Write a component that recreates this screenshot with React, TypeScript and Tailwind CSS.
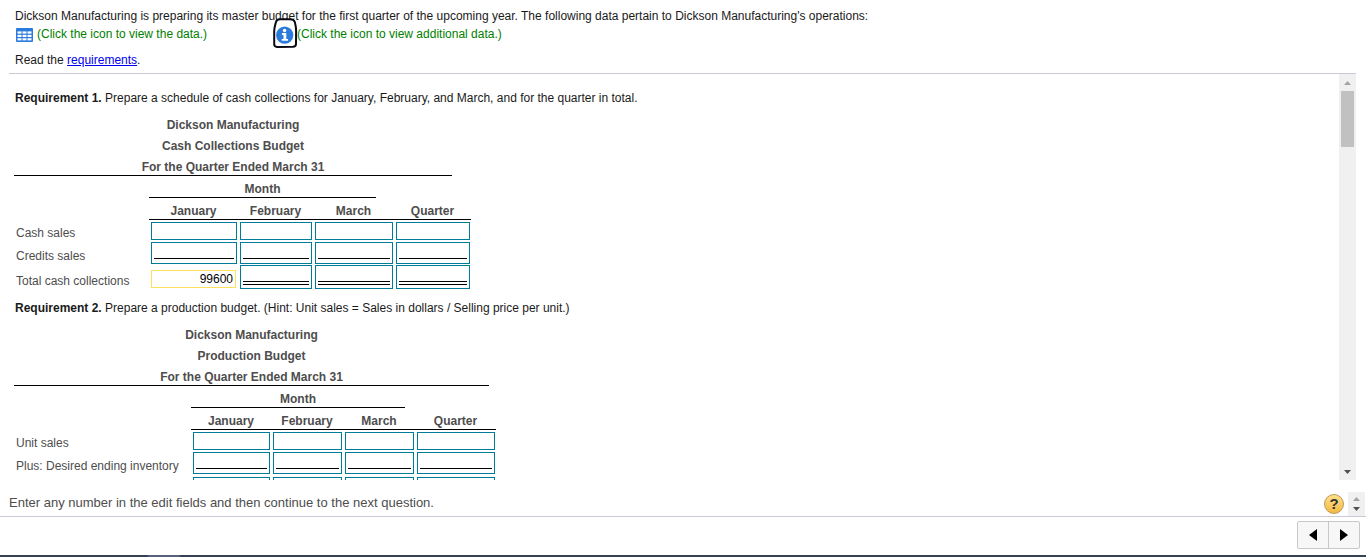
import React, { useState } from 'react';

type RowKind = 'plain' | 'single' | 'double';

interface BudgetRow {
  label: string;
  kind: RowKind;
  values?: string[];
}

interface BudgetTableProps {
  id: string;
  title: string;
  colClasses: string[];
  captionClass: string;
  monthClass: string;
  rows: BudgetRow[];
}

const COLUMNS = ['January', 'February', 'March', 'Quarter'];

const cashRows: BudgetRow[] = [
  { label: 'Cash sales', kind: 'plain' },
  { label: 'Credits sales', kind: 'single' },
  { label: 'Total cash collections', kind: 'double', values: ['99600', '', '', ''] },
];

const productionRows: BudgetRow[] = [
  { label: 'Unit sales', kind: 'plain' },
  { label: 'Plus: Desired ending inventory', kind: 'single' },
  { label: '', kind: 'plain' },
];

const labelPadding: Record<RowKind, string> = {
  plain: 'pb-0',
  single: 'pb-px',
  double: 'pb-0',
};

const cellPadding: Record<RowKind, string> = {
  plain: 'pt-[2px] pb-px',
  single: 'py-px',
  double: 'p-0',
};

const boxHeight: Record<RowKind, string> = {
  plain: 'h-[18px]',
  single: 'h-[22px]',
  double: 'h-6',
};

const AmountCell = ({ name, kind, initial }: { name: string; kind: RowKind; initial: string }) => {
  const [value, setValue] = useState(initial);

  // filled answers get the yellow box, without the total rules
  if (initial) {
    return (
      <input
        aria-label={name}
        value={value}
        onChange={(e) => setValue(e.target.value)}
        className="mb-px block h-[18px] w-[85px] border border-[#ffe05a] bg-white pr-[2px] text-right text-black outline-none"
      />
    );
  }

  return (
    <div className={`flex flex-col border border-[#007c9b] px-[2px] pb-[3px] ${boxHeight[kind]}`}>
      <input
        aria-label={name}
        value={value}
        onChange={(e) => setValue(e.target.value)}
        className="min-h-0 w-full flex-1 bg-transparent text-right text-black outline-none"
      />
      {kind === 'single' && <div className="mb-px h-px bg-black" />}
      {kind === 'double' && <div className="h-1 border-y border-black" />}
    </div>
  );
};

const BudgetTable = ({ id, title, colClasses, captionClass, monthClass, rows }: BudgetTableProps) => (
  <table className="ml-[14px] table-fixed border-collapse text-[#4d4d4d]">
    <caption className={`text-center font-bold ${captionClass}`}>
      <div className="border-b border-black">
        <div className="pt-[5px]">Dickson Manufacturing</div>
        <div className="pt-[5px]">{title}</div>
        <div className="pt-[5px]">For the Quarter Ended March 31</div>
      </div>
    </caption>
    <colgroup>
      {colClasses.map((cls, i) => (
        <col key={i} className={cls} />
      ))}
    </colgroup>
    <thead>
      <tr>
        <td className="p-0" />
        <th colSpan={3} className="p-0">
          <div className={`border-b border-black pt-[5px] ${monthClass}`}>Month</div>
        </th>
        <td className="p-0" />
      </tr>
      <tr>
        <td className="p-0" />
        {COLUMNS.map((col) => (
          <th key={col} scope="col" className="p-0">
            <div className="border-b border-black pt-[5px]">{col}</div>
          </th>
        ))}
      </tr>
    </thead>
    <tbody>
      {rows.map((row, r) => (
        <tr key={r}>
          <th
            scope="row"
            className={`pt-0 pr-0 pl-[2px] text-left align-bottom font-normal whitespace-nowrap ${labelPadding[row.kind]}`}
          >
            {row.label}
          </th>
          {COLUMNS.map((col, i) => (
            <td key={col} className={`align-bottom ${cellPadding[row.kind]}`}>
              <div className="pr-px pl-[2px]">
                <AmountCell name={`${id} row ${r + 1} ${col}`} kind={row.kind} initial={row.values?.[i] ?? ''} />
              </div>
            </td>
          ))}
        </tr>
      ))}
    </tbody>
  </table>
);

const GridIcon = () => (
  <svg width="17" height="14" viewBox="0 0 17 14" aria-hidden="true">
    <rect width="17" height="14" rx="1" fill="#2a7bdc" />
    <g fill="#fff">
      <rect x="1.5" y="3.4" width="4" height="2.2" />
      <rect x="6.5" y="3.4" width="4" height="2.2" />
      <rect x="11.5" y="3.4" width="4" height="2.2" />
      <rect x="1.5" y="6.8" width="4" height="2.2" />
      <rect x="6.5" y="6.8" width="4" height="2.2" />
      <rect x="11.5" y="6.8" width="4" height="2.2" />
      <rect x="1.5" y="10.2" width="4" height="2.2" />
      <rect x="6.5" y="10.2" width="4" height="2.2" />
      <rect x="11.5" y="10.2" width="4" height="2.2" />
    </g>
  </svg>
);

const InfoIcon = () => (
  <svg width="25" height="31" viewBox="0 0 25 31" aria-hidden="true">
    <path
      d="M3 4 C3.6 1.6 5 1.5 7 1.3 L17 1.2 C19.5 1.3 21 1.6 21.8 4 C22.6 7 23.2 9 23.1 13 L23 26 C23 28 22 28.6 20 28.7 L4 28.9 C2 28.8 1.2 28 1.2 26 L1.2 13 C1.3 9 2.2 7 3 4Z"
      fill="#fff"
      stroke="#0a0a14"
      strokeWidth="2"
    />
    <circle cx="11.7" cy="17.2" r="8.6" fill="#2a7bdc" />
    <circle cx="11.6" cy="12.5" r="1.7" fill="#fff" />
    <path d="M8.9 15h4.4v5.9h1.7v1.9H8.7v-1.9h1.8v-4H8.9z" fill="#fff" />
  </svg>
);

const Arrow = ({ up = false, color }: { up?: boolean; color: string }) => (
  <svg width="7" height="4" viewBox="0 0 7 4" aria-hidden="true">
    <path d={up ? 'M0 4h7L3.5 0z' : 'M0 0h7L3.5 4z'} fill={color} />
  </svg>
);

const App: React.FC = () => {
  return (
    <div className="flex h-screen flex-col bg-white font-['Liberation_Sans',Arial,sans-serif] text-[12px] leading-4 text-[#1a1a1a]">
      <header className="mr-[10px] ml-[9px] border-b border-[#c9cad6] pt-2 pb-[5px] pl-[6px]">
        <p>
          Dickson Manufacturing is preparing its master budget for the first quarter of the upcoming year. The following
          data pertain to Dickson Manufacturing's operations:
        </p>
        <div className="mt-[2px] flex text-[#008000]">
          <button type="button" className="flex w-[258px] gap-1 pl-px">
            <span className="pt-[2px]">
              <GridIcon />
            </span>
            (Click the icon to view the data.)
          </button>
          <button type="button" className="relative flex pl-6">
            <span className="absolute -top-2 left-0">
              <InfoIcon />
            </span>
            (Click the icon to view additional data.)
          </button>
        </div>
        <p className="mt-[10px]">
          Read the{' '}
          <a href="#requirements" className="text-[#0000ee] underline">
            requirements
          </a>
          .
        </p>
      </header>

      <main className="mr-[10px] flex min-h-0 flex-1">
        <div className="min-w-0 flex-1 overflow-hidden pt-4">
          <p className="mb-[6px] pl-[15px]">
            <b>Requirement 1.</b> Prepare a schedule of cash collections for January, February, and March, and for the
            quarter in total.
          </p>
          <BudgetTable
            id="Cash"
            title="Cash Collections Budget"
            colClasses={['w-[135px]', 'w-[89px]', 'w-[75px]', 'w-[81px]', 'w-[77px]']}
            captionClass="pr-[19px]"
            monthClass="mr-[18px]"
            rows={cashRows}
          />
          <p className="mt-[11px] mb-[6px] pl-[15px]">
            <b>Requirement 2.</b> Prepare a production budget. (Hint: Unit sales = Sales in dollars / Selling price per
            unit.)
          </p>
          <BudgetTable
            id="Production"
            title="Production Budget"
            colClasses={['w-[177px]', 'w-[80px]', 'w-[72px]', 'w-[72px]', 'w-[81px]']}
            captionClass="pr-[7px]"
            monthClass="mr-[10px]"
            rows={productionRows}
          />
        </div>
        <div className="flex w-[17px] flex-col items-center bg-[#f0f0f0]">
          <div className="flex h-[17px] items-center">
            <Arrow up color="#a3a3a3" />
          </div>
          <div className="w-full flex-1 px-[2px]">
            <div className="h-[15%] bg-[#c1c1c1]" />
          </div>
          <div className="flex h-[17px] items-center">
            <Arrow color="#505050" />
          </div>
        </div>
      </main>

      <footer>
        <div className="flex h-[37px] items-end border-b border-[#c9cad6] pl-[9px] text-[13px] text-[#4d4d4d]">
          <p className="flex-1 pb-[5px]">Enter any number in the edit fields and then continue to the next question.</p>
          <button
            type="button"
            className="mr-1 mb-[2px] h-5 w-5 rounded-full border border-[#b99a5c] bg-linear-to-b from-[#ffdf88] to-[#f5b942] text-[15px] leading-4 font-bold text-[#333]"
          >
            ?
          </button>
          <div className="mr-px flex h-6 w-[17px] flex-col items-center justify-between bg-[#f0f0f0] py-[5px]">
            <Arrow up color="#a3a3a3" />
            <Arrow color="#505050" />
          </div>
        </div>
        <div className="flex h-[38px] justify-end pt-1 pr-[6px]">
          <div className="flex h-7 rounded-[2px] border border-[#c8c8c8] bg-[#f7f7f7]">
            <button
              type="button"
              aria-label="Previous question"
              className="flex w-[31px] items-center justify-center border-r border-[#c8c8c8]"
            >
              <svg width="8" height="12" viewBox="0 0 8 12">
                <path d="M8 0v12L0 6z" fill="#000" />
              </svg>
            </button>
            <button type="button" aria-label="Next question" className="flex w-[30px] items-center justify-center">
              <svg width="8" height="12" viewBox="0 0 8 12">
                <path d="M0 0v12l8-6z" fill="#000" />
              </svg>
            </button>
          </div>
        </div>
        <div className="h-[2px] bg-[#364152] pl-[148px]">
          <div className="h-full w-8 bg-[#55607a]" />
        </div>
      </footer>
    </div>
  );
};

export default App;
